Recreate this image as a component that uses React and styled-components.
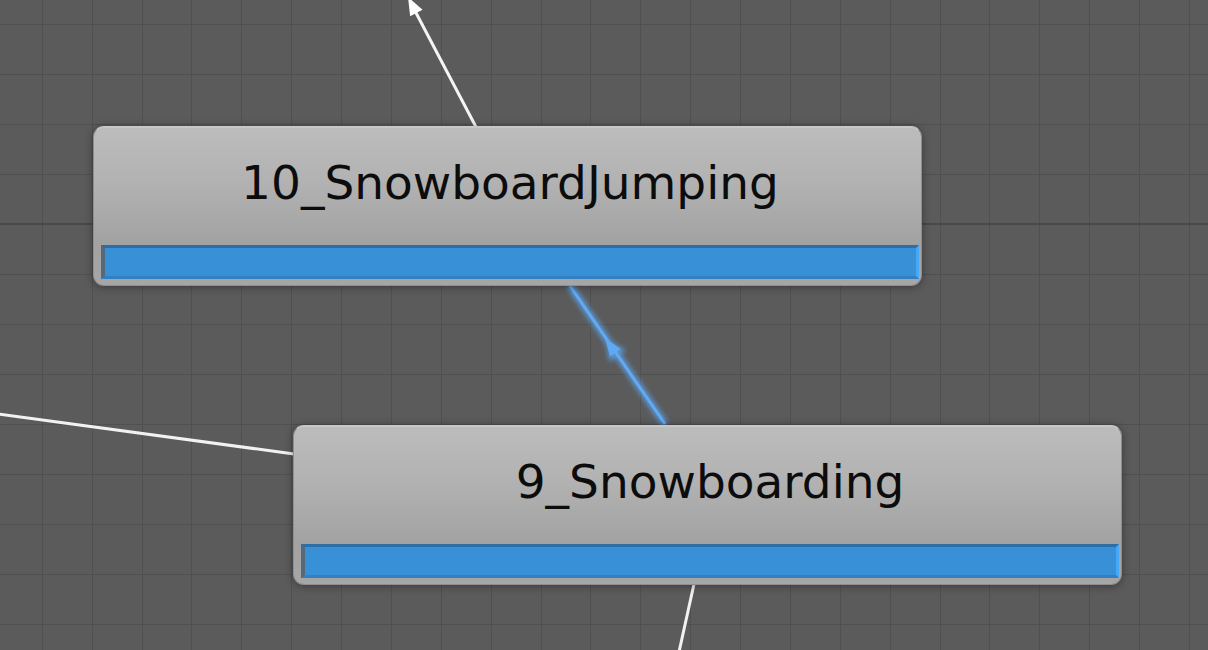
import React from "react";
import styled, { createGlobalStyle } from "styled-components";

const GlobalStyle = createGlobalStyle`
  html, body { margin: 0; padding: 0; background: #5b5b5b; overflow: hidden; }
  #root { width: 1208px; height: 650px; }
`;

const Canvas = styled.div`
  position: relative;
  width: 1208px;
  height: 650px;
  overflow: hidden;
  background-color: #5b5b5b;
  background-image:
    linear-gradient(to bottom, transparent 223.5px, #484848 223.5px, #484848 224.8px, transparent 224.8px),
    repeating-linear-gradient(to right, #505050 0, #505050 1px, transparent 1px, transparent 49.87px),
    repeating-linear-gradient(to bottom, #505050 0, #505050 1px, transparent 1px, transparent 50px);
  background-position: 0 0, -8px 0, 0 -26px;
  background-size: 100% 100%, calc(100% + 60px) 100%, 100% calc(100% + 60px);
  background-repeat: no-repeat;
`;

const Edges = styled.svg`
  position: absolute;
  left: 0;
  top: 0;
  width: 1208px;
  height: 650px;
  overflow: visible;
`;

const Node = styled.div`
  position: absolute;
  left: ${(p) => p.$x}px;
  top: ${(p) => p.$y}px;
  width: 829px;
  height: 160px;
  box-sizing: border-box;
  border-radius: 11px;
  border: 1px solid #8e8e8e;
  border-top-color: #c6c6c6;
  background: linear-gradient(to bottom, #bcbcbc 0%, #b2b2b2 35%, #a2a2a2 74%, #a6a6a6 100%);
  box-shadow: 0 1px 8px rgba(0, 0, 0, 0.38), inset 0 1px 0 rgba(255, 255, 255, 0.18);
  display: flex;
  flex-direction: column;
  padding: 0 2px 6px 7px;
`;

const Title = styled.div`
  flex: 1;
  display: flex;
  align-items: center;
  justify-content: center;
  padding-bottom: 7px;
  font-family: "DejaVu Sans", Verdana, sans-serif;
  font-size: 47px;
  color: #0c0c0c;
  white-space: nowrap;
`;

const Bar = styled.div`
  height: 34px;
  box-sizing: border-box;
  background: #3891d6;
  border-top: 3px solid #2d6fa5;
  border-bottom: 3px solid #3280c1;
  border-left: 4px solid #55697a;
  border-right: 3px solid #47a8f7;
`;

function StateNode({ x, y, name }) {
  return (
    <Node $x={x} $y={y}>
      <Title>{name}</Title>
      <Bar />
    </Node>
  );
}

function arrowHead(tip, from, len, half) {
  const dx = from[0] - tip[0];
  const dy = from[1] - tip[1];
  const l = Math.hypot(dx, dy);
  const ux = dx / l;
  const uy = dy / l;
  const bx = tip[0] + ux * len;
  const by = tip[1] + uy * len;
  const nx = -uy;
  const ny = ux;
  return `${tip[0]},${tip[1]} ${bx + nx * half},${by + ny * half} ${bx - nx * half},${by - ny * half}`;
}

export default function App() {
  const whiteTip = [408, -3];
  const blueTip = [605, 338];
  return (
    <>
      <GlobalStyle />
      <Canvas>
        <Edges viewBox="0 0 1208 650">
          <defs>
            <filter id="glow" x="-50%" y="-50%" width="200%" height="200%">
              <feGaussianBlur stdDeviation="2.5" />
            </filter>
          </defs>
          <line x1="476" y1="127" x2="414" y2="9" stroke="#f4f4f4" strokeWidth="3" />
          <polygon points={arrowHead(whiteTip, [476, 127], 18, 7)} fill="#ffffff" />
          <line x1="-2" y1="414" x2="294" y2="454" stroke="#f2f2f2" strokeWidth="3" />
          <line x1="694" y1="584" x2="679" y2="652" stroke="#f2f2f2" strokeWidth="3" />
          <g filter="url(#glow)" opacity="0.8">
            <line x1="570" y1="286" x2="665" y2="424" stroke="#5aa6f2" strokeWidth="7" />
            <polygon points={arrowHead(blueTip, [665, 424], 22, 10)} fill="#5aa6f2" />
          </g>
          <line x1="570" y1="286" x2="665" y2="424" stroke="#62aaf4" strokeWidth="3" />
          <polygon points={arrowHead(blueTip, [665, 424], 18, 6.5)} fill="#5fa8f3" />
        </Edges>
        <StateNode x={93} y={126} name="10_SnowboardJumping" />
        <StateNode x={293} y={425} name="9_Snowboarding" />
      </Canvas>
    </>
  );
}
